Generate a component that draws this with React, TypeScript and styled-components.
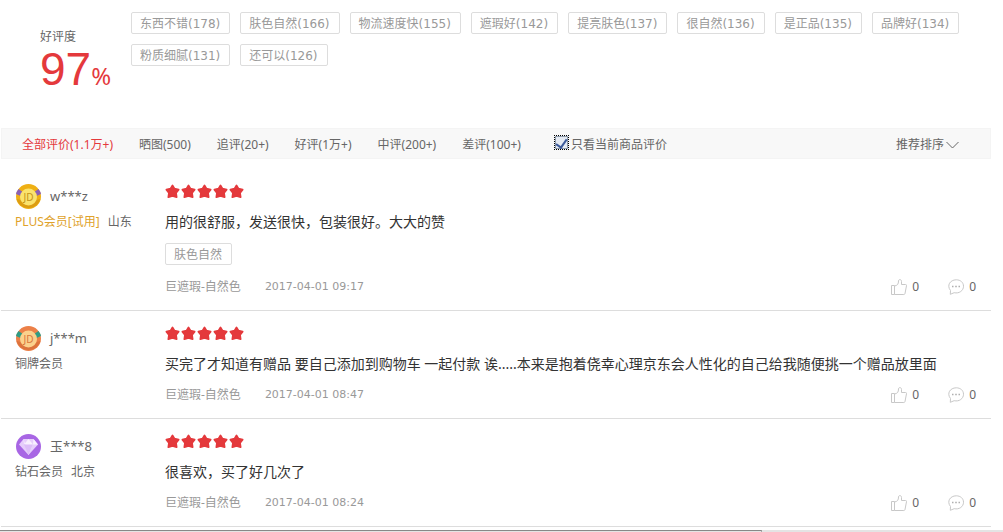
import React from 'react';
import styled, { createGlobalStyle } from 'styled-components';

const GlobalStyle = createGlobalStyle`
  * { box-sizing: border-box; }
  body {
    margin: 0;
    background: #fff;
    color: #666;
    font: 12px/18px "Noto Sans", "Noto Sans CJK SC", sans-serif;
  }
  button, input, p, h2 { font: inherit; margin: 0; padding: 0; }
  button { color: inherit; background: none; border: 0; cursor: pointer; }
`;

const Page = styled.main`
  padding: 0 12px 0 1px;
`;

const Summary = styled.section`
  display: flex;
  min-height: 128px;
  padding-top: 12px;
`;

const Score = styled.div`
  flex: 0 0 130px;
  padding: 16px 0 0 39px;
`;

const ScoreTitle = styled.h2`
  font-weight: 400;
`;

const ScoreValue = styled.p`
  color: #e4393c;
  font-family: "Liberation Sans", sans-serif;
  font-size: 46px;
  line-height: 46px;
`;

const Percent = styled.span`
  font-family: "Noto Sans", sans-serif;
  font-size: 24px;
`;

const Tags = styled.div`
  display: flex;
  flex-wrap: wrap;
  align-content: flex-start;
  gap: 10px;
`;

const Tag = styled.button`
  height: 22px;
  padding: 2px 9px 0 8px;
  border: 1px solid #ddd;
  border-radius: 2px;
  color: #999;
  font-family: "DejaVu Sans", "Noto Sans CJK SC", sans-serif;
  line-height: 18px;
  white-space: nowrap;
`;

const FilterBar = styled.nav`
  display: flex;
  align-items: center;
  height: 31px;
  padding: 2px 31px 0 20px;
  background: #f8f8f8;
  border: 1px solid #f4f4f4;
`;

const Filters = styled.div`
  display: flex;
  gap: 26px;
`;

const Filter = styled.button<{ $active?: boolean }>`
  color: ${(p) => (p.$active ? '#e4393c' : '#666')};
  white-space: nowrap;
`;

const OnlyCurrent = styled.label`
  display: flex;
  align-items: flex-start;
  gap: 3px;
  margin-left: 34px;
  white-space: nowrap;
`;

const Check = styled.input`
  appearance: none;
  display: grid;
  width: 13px;
  height: 13px;
  border: 1px solid #8e9bab;
  outline: 1px dotted #000;
  background: #e4eaf3;
  &:checked::before {
    content: "";
    width: 5px;
    height: 9px;
    margin: 0 auto;
    border: solid #3c5a9a;
    border-width: 0 2px 2px 0;
    transform: rotate(35deg);
  }
`;

const Sort = styled.button`
  display: flex;
  align-items: center;
  gap: 2px;
  margin-left: auto;
`;

const ReviewList = styled.section`
  padding-top: 10px;
`;

const Review = styled.article`
  display: flex;
  padding: 14px 15px 12px 14px;
  border-bottom: 1px solid #ddd;
`;

const User = styled.div`
  flex: 0 0 150px;
`;

const UserName = styled.div`
  display: flex;
  align-items: center;
  gap: 8px;
  height: 26px;
  font-size: 13px;
`;

const Level = styled.div`
  display: flex;
  gap: 8px;
  margin-top: 4px;
`;

const LevelName = styled.span<{ $plus?: boolean }>`
  color: ${(p) => (p.$plus ? '#e0a22b' : '#666')};
`;

const Body = styled.div`
  flex: 1;
  min-width: 0;
`;

const Stars = styled.div`
  display: flex;
  gap: 1px;
  height: 16px;
  padding-top: 1px;
`;

const Comment = styled.p`
  margin-top: 11px;
  color: #333;
  font-size: 14px;
  line-height: 24px;
`;

const ReviewTags = styled.div`
  display: flex;
  padding: 9px 0 3px;
`;

const Footer = styled.div`
  display: flex;
  align-items: center;
  margin-top: 8px;
  height: 22px;
  color: #999;
`;

const Product = styled.span`
  margin-right: 24px;
`;

const Time = styled.time`
  font-family: "DejaVu Sans", sans-serif;
  font-size: 11px;
`;

const Actions = styled.div`
  display: flex;
  gap: 29px;
  margin-left: auto;
`;

const Action = styled.button`
  display: flex;
  align-items: center;
  gap: 5px;
  color: #666;
`;

const ScrollTrack = styled.div`
  height: 2px;
  margin: 3px -12px 0 -1px;
  background: #e4e4e4;
`;

const ScrollThumb = styled.div`
  width: 76%;
  height: 2px;
  border-top: 1px solid #888;
  border-right: 1px solid #aaa;
`;

function Star() {
  return (
    <svg width="15" height="15" viewBox="0 0 15 15" aria-hidden="true">
      <path
        d="M7.500 1.500 9.500 4.700 13.600 5.600 11 8.900 11.600 13.200 7.500 12 3.400 13.200 4 8.900 1.400 5.600 5.500 4.700Z"
        fill="#e4393c" stroke="#e4393c" strokeWidth="1.800" strokeLinejoin="round"
      />
    </svg>
  );
}

function Thumb() {
  return (
    <svg width="16" height="17" viewBox="0 0 16 17" fill="none" stroke="#c8c8c8" aria-hidden="true">
      <path d="M.5 6.500H3.500V15.500H.5ZM3.500 7C6.500 6.500 7.500 5 7.500 2 7.500 0 10.500 0 10.500 2.500V5.500H14.500Q15.700 5.500 15.500 6.700L14 14.500Q13.700 15.500 12.800 15.500H3.500" />
    </svg>
  );
}

function Bubble() {
  return (
    <svg width="16" height="17" viewBox="0 0 16 17" fill="none" stroke="#c8c8c8" aria-hidden="true">
      <path d="M2.500 11.500C-1.500 6.500 2 .8 8.300.8 12.500.8 15.500 3.500 15.500 7.200 15.500 11.800 11 14.800 6.200 13.700L2.300 15.300Z" />
      <path d="M4 7.500H5.500M7.200 7.500H8.800M10.500 7.500H12" strokeWidth="1.500" stroke="#b0b0b0" />
    </svg>
  );
}

type BadgeKind = 'gold' | 'bronze' | 'diamond';

const medal = {
  gold: { ring: '#efb014', rim: '#dc9d12', ribbon: '#8a61b5', face: '#fbe36d', ink: '#c49418' },
  bronze: { ring: '#ec8048', rim: '#dc733c', ribbon: '#2f9c85', face: '#fbd18c', ink: '#d9763c' },
};

function Badge({ kind }: { kind: BadgeKind }) {
  if (kind === 'diamond') {
    return (
      <svg width="27" height="27" viewBox="0 0 27 27" aria-hidden="true">
        <circle cx="13.5" cy="13.5" r="12.500" fill="#a866e4" />
        <path d="M8.500 6H18.500L23 11.500 13.500 22 4 11.500Z" fill="#e6cdfb" />
        <path d="M8.500 6 9 11.500 13.500 6 18 11.500 18.500 6 23 11.500H18L13.500 22Z" fill="#f8effe" />
        <path d="M9 11.500H18L13.500 22Z" fill="#dcbdf8" />
      </svg>
    );
  }
  const c = medal[kind];
  return (
    <svg width="27" height="27" viewBox="0 0 27 27" aria-hidden="true">
      <circle cx="13.5" cy="13.5" r="12.500" fill={c.ring} />
      <path d="M1.500 16A12.500 12.500 0 0 0 25.500 16L21 17H6Z" fill={c.rim} />
      <path d="M3.500 6 8.500 9.500 5.500 13 1 11Q1.500 8.500 3.500 6ZM23.500 6 18.500 9.500 21.500 13 26 11Q25.500 8.500 23.500 6Z" fill={c.ribbon} />
      <circle cx="13.5" cy="14" r="8.500" fill={c.face} />
      <text x="13.5" y="18" textAnchor="middle" fontSize="10" fontFamily="Noto Sans, sans-serif" fill={c.ink}>JD</text>
    </svg>
  );
}

const summaryTags = [
  '东西不错(178)', '肤色自然(166)', '物流速度快(155)', '遮瑕好(142)', '提亮肤色(137)',
  '很自然(136)', '是正品(135)', '品牌好(134)', '粉质细腻(131)', '还可以(126)',
];

const filters = ['全部评价(1.1万+)', '晒图(500)', '追评(20+)', '好评(1万+)', '中评(200+)', '差评(100+)'];

interface ReviewData {
  badge: BadgeKind;
  name: string;
  level: string;
  plus?: boolean;
  place?: string;
  text: string;
  tags?: string[];
  time: string;
}

const reviews: ReviewData[] = [
  {
    badge: 'gold', name: 'w***z', level: 'PLUS会员[试用]', plus: true, place: '山东',
    text: '用的很舒服，发送很快，包装很好。大大的赞', tags: ['肤色自然'], time: '2017-04-01 09:17',
  },
  {
    badge: 'bronze', name: 'j***m', level: '铜牌会员',
    text: '买完了才知道有赠品 要自己添加到购物车 一起付款 诶.....本来是抱着侥幸心理京东会人性化的自己给我随便挑一个赠品放里面',
    time: '2017-04-01 08:47',
  },
  {
    badge: 'diamond', name: '玉***8', level: '钻石会员', place: '北京',
    text: '很喜欢，买了好几次了', time: '2017-04-01 08:24',
  },
];

export default function App() {
  return (
    <>
      <GlobalStyle />
      <Page lang="zh-CN">
        <Summary>
          <Score>
            <ScoreTitle>好评度</ScoreTitle>
            <ScoreValue>97<Percent>%</Percent></ScoreValue>
          </Score>
          <Tags>
            {summaryTags.map((t) => <Tag key={t}>{t}</Tag>)}
          </Tags>
        </Summary>
        <FilterBar>
          <Filters>
            {filters.map((f, i) => <Filter key={f} $active={i === 0}>{f}</Filter>)}
          </Filters>
          <OnlyCurrent>
            <Check type="checkbox" defaultChecked />
            只看当前商品评价
          </OnlyCurrent>
          <Sort>
            推荐排序
            <svg width="13" height="8" viewBox="0 0 13 8" fill="none" stroke="#666" aria-hidden="true">
              <path d="M.5 1 6.500 7 12.500 1" />
            </svg>
          </Sort>
        </FilterBar>
        <ReviewList>
          {reviews.map((r) => (
            <Review key={r.name}>
              <User>
                <UserName><Badge kind={r.badge} />{r.name}</UserName>
                <Level>
                  <LevelName $plus={r.plus}>{r.level}</LevelName>
                  {r.place && <span>{r.place}</span>}
                </Level>
              </User>
              <Body>
                <Stars role="img" aria-label="5星">
                  {[0, 1, 2, 3, 4].map((n) => <Star key={n} />)}
                </Stars>
                <Comment>{r.text}</Comment>
                {r.tags && (
                  <ReviewTags>{r.tags.map((t) => <Tag key={t}>{t}</Tag>)}</ReviewTags>
                )}
                <Footer>
                  <Product>巨遮瑕-自然色</Product>
                  <Time>{r.time}</Time>
                  <Actions>
                    <Action aria-label="点赞 0"><Thumb />0</Action>
                    <Action aria-label="回复 0"><Bubble />0</Action>
                  </Actions>
                </Footer>
              </Body>
            </Review>
          ))}
        </ReviewList>
        <ScrollTrack><ScrollThumb /></ScrollTrack>
      </Page>
    </>
  );
}
